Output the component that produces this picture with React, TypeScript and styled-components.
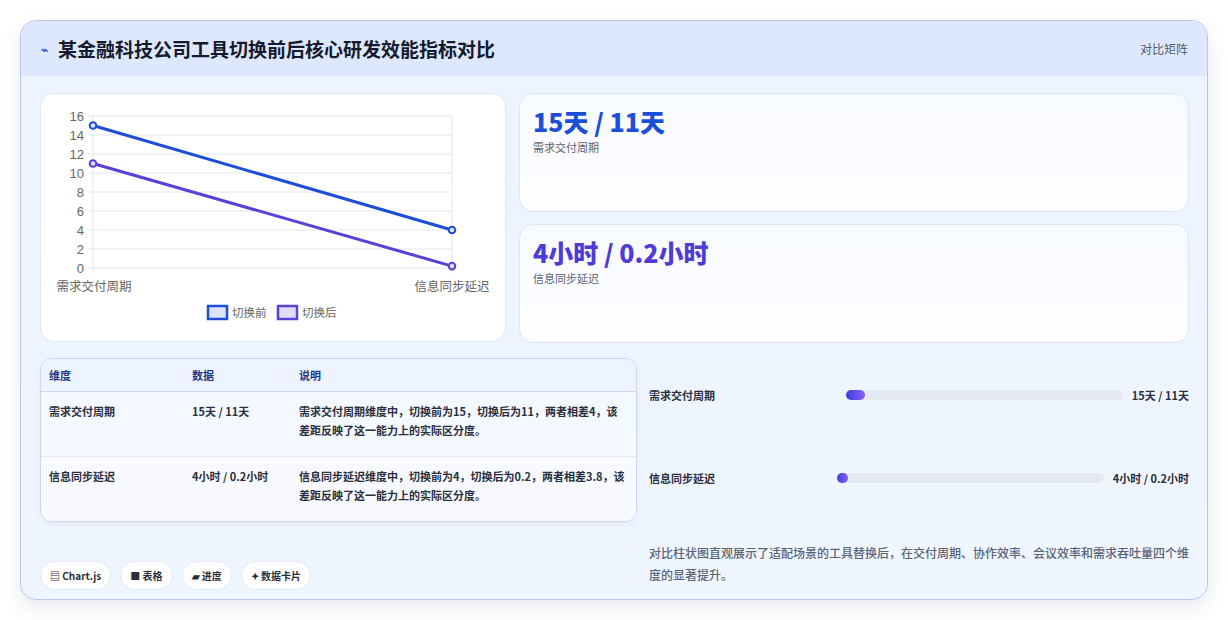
import React from "react";
import styled, { createGlobalStyle } from "styled-components";

const Global = createGlobalStyle`
  body { margin: 0; background: #fff; font-family: "Noto Sans CJK SC", "Noto Sans", sans-serif; }
  * { box-sizing: border-box; }
`;

const Page = styled.div`padding: 20px; width: 1228px;`;
const Card = styled.div`
  width: 1188px; height: 580px; border: 1px solid #b9c6ea; border-radius: 16px;
  background: linear-gradient(180deg, #edf3ff 0%, #f0f6ff 100%);
  box-shadow: 0 8px 20px rgba(60,80,140,0.12); overflow: hidden;
`;
const Header = styled.div`
  height: 55px; background: #dde8fd; display: flex; align-items: center; justify-content: space-between;
  padding: 0 19px 0 20px;
`;
const Title = styled.h1`
  margin: 0; font-size: 19px; font-weight: 700; color: #151a2e; display: flex; align-items: center; gap: 10px;
`;
const Bolt = styled.span`color: #3b5bdb; font-size: 12px;`;
const Tag = styled.span`font-size: 12px; color: #525c70;`;
const Body = styled.div`padding: 17px 19px 0 19px; display: flex; flex-direction: column; gap: 15px;`;
const TopRow = styled.div`display: grid; grid-template-columns: 466px 670px; gap: 13px;`;
const ChartCard = styled.div`
  height: 249px; background: #fff; border: 1px solid #e1e8f5; border-radius: 14px; overflow: hidden;
`;
const Stats = styled.div`display: flex; flex-direction: column; gap: 12px;`;
const StatCard = styled.div`
  height: 119px; border: 1px solid #dde5f5; border-radius: 14px; padding: 9px 13px;
  background: linear-gradient(180deg, #f7faff, #fefeff);
`;
const StatValue = styled.div<{ $c: string }>`font-size: 25px; font-weight: 800; color: ${p => p.$c}; line-height: 36px;`;
const StatLabel = styled.div`font-size: 11px; color: #5a6272;`;
const BottomRow = styled.div`display: grid; grid-template-columns: 596px 540px; gap: 13px;`;
const Left = styled.div`display: flex; flex-direction: column;`;
const Table = styled.table`
  width: 597px; border-collapse: separate; border-spacing: 0; border: 1px solid #cdd6ea; border-radius: 12px; overflow: hidden;
  font-size: 11px; font-weight: 600; color: #2a2f3e;
  box-shadow: 0 2px 4px rgba(60,80,140,0.08);
`;
const Th = styled.th`
  text-align: left; background: #edf3ff; color: #1e3a8a; font-weight: 600; height: 33px; padding: 0 8px;
  border-bottom: 1px solid #cdd6ea;
`;
const Td = styled.td<{ $bg: string; $bt?: boolean; $w?: number }>`
  background: ${p => p.$bg}; vertical-align: top; padding: 10px 8px 16px; line-height: 19px;
  border-top: ${p => (p.$bt ? "1px solid #e2e8f3" : "none")};
  width: ${p => (p.$w ? `${p.$w}px` : "auto")};
`;
const Chips = styled.div`display: flex; gap: 9px; margin-top: 39px;`;
const Chip = styled.span`
  height: 29px; padding: 0 9px; border-radius: 15px; background: #fff; border: 1px solid #e3e9f5;
  display: inline-flex; align-items: center; gap: 3px; font-size: 10px; font-weight: 600; color: #2a2f3e;
`;
const Right = styled.div`display: flex; flex-direction: column; padding-top: 26px;`;
const BarRow = styled.div`display: flex; align-items: center; height: 22px; margin-bottom: 61px; font-size: 11px; font-weight: 600; color: #2a2f3e;`;
const BarLabel = styled.span<{ $w: number }>`width: ${p => p.$w}px; flex: none;`;
const Track = styled.div`flex: 1; height: 10px; border-radius: 5px; background: #e3e8f1;`;
const Fill = styled.div`height: 10px; border-radius: 5px; background: linear-gradient(90deg, #3b3fd8, #8b5cf6);`;
const BarValue = styled.span`margin-left: 9px; flex: none;`;
const Desc = styled.p`margin: -8px 0 0; font-size: 12px; line-height: 22px; color: #5a6478; font-weight: 500;`;

const sy = (v: number) => 174 - v * 9.5;
const ticks = [0, 2, 4, 6, 8, 10, 12, 14, 16];

const Chart = () => (
  <svg width="465" height="248" viewBox="0 0 465 248">
    {ticks.map(v => (
      <g key={v}>
        <line x1="47" x2="411" y1={sy(v)} y2={sy(v)} stroke="#e3e6ec" />
        <text x="43" y={sy(v) + 5} textAnchor="end" fontSize="13" fill="#666" fontFamily="Liberation Sans, sans-serif">{v}</text>
      </g>
    ))}
    <line x1="52" x2="52" y1={sy(16)} y2="179" stroke="#e3e6ec" />
    <line x1="411" x2="411" y1={sy(16)} y2="179" stroke="#e3e6ec" />
    <line x1="52" y1={sy(15)} x2="411" y2={sy(4)} stroke="#1d4ed8" strokeWidth="3" />
    <line x1="52" y1={sy(11)} x2="411" y2={sy(0.2)} stroke="#5b3fd6" strokeWidth="3" />
    <circle cx="52" cy={sy(15)} r="3.3" fill="#dbe4fb" stroke="#1d4ed8" strokeWidth="2" />
    <circle cx="411" cy={sy(4)} r="3.3" fill="#dbe4fb" stroke="#1d4ed8" strokeWidth="2" />
    <circle cx="52" cy={sy(11)} r="3.3" fill="#e2dcfb" stroke="#5b3fd6" strokeWidth="2" />
    <circle cx="411" cy={sy(0.2)} r="3.3" fill="#e2dcfb" stroke="#5b3fd6" strokeWidth="2" />
    <text x="53" y="197" textAnchor="middle" fontSize="12.5" fill="#666">需求交付周期</text>
    <text x="411" y="197" textAnchor="middle" fontSize="12.5" fill="#666">信息同步延迟</text>
    <rect x="167" y="212" width="19" height="13" fill="#dbe4fb" stroke="#1d4ed8" strokeWidth="2.5" />
    <text x="191" y="223" fontSize="11.5" fill="#666">切换前</text>
    <rect x="237" y="212" width="19" height="13" fill="#e2dcfb" stroke="#5b3fd6" strokeWidth="2.5" />
    <text x="261" y="223" fontSize="11.5" fill="#666">切换后</text>
  </svg>
);

const rows = [
  { dim: "需求交付周期", data: "15天 / 11天", note: "需求交付周期维度中，切换前为15，切换后为11，两者相差4，该差距反映了这一能力上的实际区分度。", bg: "#f4f8ff" },
  { dim: "信息同步延迟", data: "4小时 / 0.2小时", note: "信息同步延迟维度中，切换前为4，切换后为0.2，两者相差3.8，该差距反映了这一能力上的实际区分度。", bg: "#f8faff" },
];

export default function App() {
  return (
    <Page>
      <Global />
      <Card>
        <Header>
          <Title><Bolt>⌁</Bolt>某金融科技公司工具切换前后核心研发效能指标对比</Title>
          <Tag>对比矩阵</Tag>
        </Header>
        <Body>
          <TopRow>
            <ChartCard><Chart /></ChartCard>
            <Stats>
              <StatCard>
                <StatValue $c="#1d4ed8">15天 / 11天</StatValue>
                <StatLabel>需求交付周期</StatLabel>
              </StatCard>
              <StatCard>
                <StatValue $c="#4f3bd6">4小时 / 0.2小时</StatValue>
                <StatLabel>信息同步延迟</StatLabel>
              </StatCard>
            </Stats>
          </TopRow>
          <BottomRow>
            <Left>
              <Table>
                <thead>
                  <tr><Th>维度</Th><Th>数据</Th><Th>说明</Th></tr>
                </thead>
                <tbody>
                  {rows.map((r, i) => (
                    <tr key={r.dim}>
                      <Td $bg={r.bg} $bt={i > 0} $w={143}>{r.dim}</Td>
                      <Td $bg={r.bg} $bt={i > 0} $w={107}>{r.data}</Td>
                      <Td $bg={r.bg} $bt={i > 0}>{r.note}</Td>
                    </tr>
                  ))}
                </tbody>
              </Table>
              <Chips>
                <Chip>▤ Chart.js</Chip>
                <Chip>■ 表格</Chip>
                <Chip>▰ 进度</Chip>
                <Chip>✦ 数据卡片</Chip>
              </Chips>
            </Left>
            <Right>
              <BarRow>
                <BarLabel $w={197}>需求交付周期</BarLabel>
                <Track><Fill style={{ width: "7%" }} /></Track>
                <BarValue>15天 / 11天</BarValue>
              </BarRow>
              <BarRow>
                <BarLabel $w={188}>信息同步延迟</BarLabel>
                <Track><Fill style={{ width: "4%" }} /></Track>
                <BarValue>4小时 / 0.2小时</BarValue>
              </BarRow>
              <Desc>对比柱状图直观展示了适配场景的工具替换后，在交付周期、协作效率、会议效率和需求吞吐量四个维度的显著提升。</Desc>
            </Right>
          </BottomRow>
        </Body>
      </Card>
    </Page>
  );
}
